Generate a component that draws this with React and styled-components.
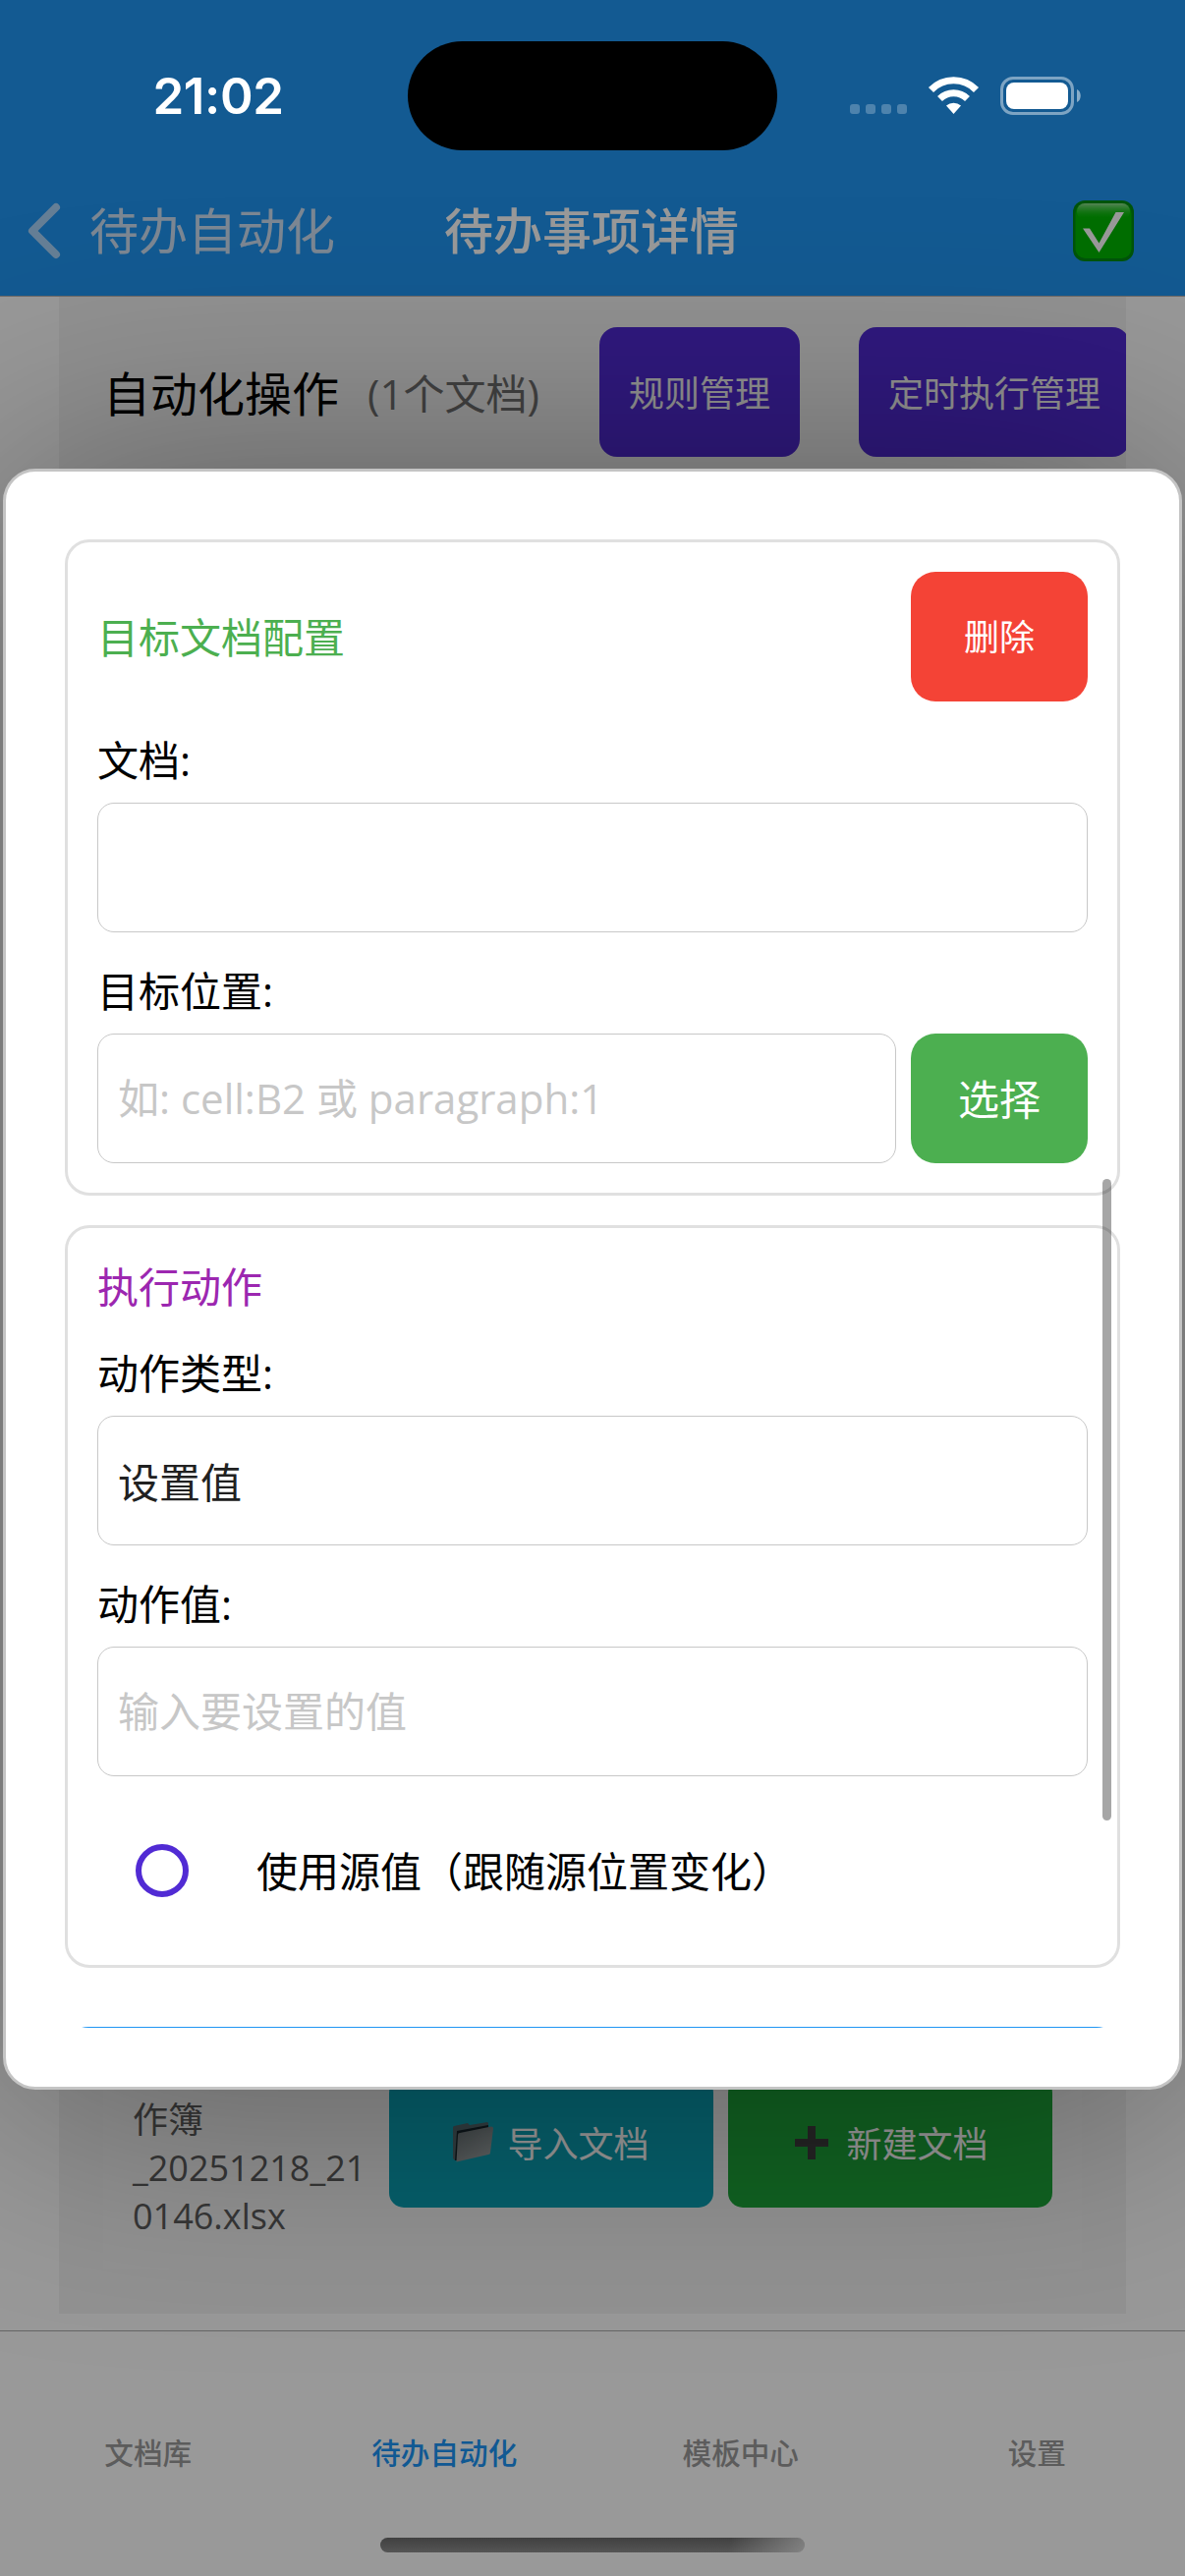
import React, { useState } from "react";
import styled, { createGlobalStyle } from "styled-components";

const GlobalStyle = createGlobalStyle`
  * {
    box-sizing: border-box;
  }

  body {
    margin: 0;
    font-family: "Open Sans", "Noto Sans CJK SC", sans-serif;
  }

  button,
  input {
    font-family: inherit;
    margin: 0;
  }
`;

const Screen = styled.div`
  position: relative;
  display: flex;
  flex-direction: column;
  width: 1206px;
  height: 2622px;
  overflow: hidden;
  background: #fff;
`;

/* status bar */

const StatusBar = styled.div`
  position: absolute;
  z-index: 3;
  top: 0;
  left: 0;
  right: 0;
  display: grid;
  grid-template-columns: 415px 376px 1fr;
  height: 194px;
  align-items: center;
  color: #fff;
`;

const Time = styled.div`
  padding: 2px 0 0 29px;
  text-align: center;
  font-family: Inter, sans-serif;
  font-size: 51px;
  font-weight: 600;
  line-height: 60px;
  letter-spacing: -0.4px;
`;

const Island = styled.div`
  height: 111px;
  border-radius: 56px;
  background: #000;
`;

const Indicators = styled.div`
  display: flex;
  align-items: center;
  padding-left: 74px;
`;

/* page under the dialog */

const NavBar = styled.header`
  display: grid;
  grid-template-columns: 1fr auto 1fr;
  align-items: center;
  flex: none;
  height: 302px;
  padding: 168px 52px 0 28px;
  border-bottom: 1px solid #b5b0ac;
  background: #2196f3;
`;

const BackLink = styled.div`
  display: flex;
  align-items: center;
  gap: 29px;
  color: #cfe2f5;
  font-size: 50px;
  line-height: 60px;
`;

const NavTitle = styled.h1`
  margin: 0 0 0 22px;
  color: #fff;
  font-size: 50px;
  font-weight: 500;
  line-height: 60px;
`;

const NavAction = styled.div`
  display: flex;
  justify-content: flex-end;
`;

const Content = styled.main`
  display: flex;
  flex: 1;
  padding: 0 60px 17px;
  min-height: 0;
`;

const Panel = styled.section`
  display: flex;
  flex: 1;
  min-width: 0;
  flex-direction: column;
  justify-content: space-between;
  padding: 31px 45px 45px;
  overflow: hidden;
  background: #f3f3f3;
`;

const PanelHeader = styled.div`
  display: flex;
  align-items: center;
  white-space: nowrap;
`;

const PanelTitle = styled.h2`
  margin: 0;
  width: 269px;
  flex: none;
  padding-bottom: 3px;
  font-size: 48px;
  font-weight: 400;
  color: #000;
`;

const PanelCount = styled.span`
  width: 236px;
  flex: none;
  padding-bottom: 2px;
  color: #6e6e6e;
  font-size: 42px;
`;

const PurpleButton = styled.button`
  flex: none;
  height: 132px;
  margin-right: 60px;
  padding: 0 30px 2px;
  border: 0;
  border-radius: 18px;
  background: #512bd4;
  color: #f3f3f3;
  font-size: 36px;
`;

const DocumentCard = styled.div`
  display: flex;
  align-items: flex-end;
  height: 300px;
  padding: 30px;
  background: #f5f5f5;
`;

const DocumentName = styled.div`
  width: 261px;
  color: #5c5c5c;
  font-size: 36px;
  line-height: 49px;
`;

const DocumentButton = styled.button`
  display: flex;
  align-items: center;
  justify-content: center;
  gap: 14px;
  width: 330px;
  height: 132px;
  margin: 0 15px 33px 0;
  padding: 0 0 1px;
  border: 0;
  border-radius: 15px;
  background: ${(props) => props.$color};
  color: #fff;
  font-size: 36px;

  &:last-child {
    margin-right: 0;
    padding-left: 3px;
  }
`;

const TabBar = styled.nav`
  display: grid;
  grid-template-columns: repeat(4, 1fr);
  flex: none;
  height: 250px;
  padding-top: 104px;
  border-top: 1px solid #aaa;
  background: #fff;
`;

const Tab = styled.div`
  text-align: center;
  color: ${(props) => (props.$active ? "#1c94f5" : "#999")};
  font-size: 29.6px;
  font-weight: 500;
  line-height: 40px;
`;

const HomeIndicator = styled.div`
  position: absolute;
  z-index: 3;
  left: 387px;
  bottom: 24px;
  width: 432px;
  height: 15px;
  border-radius: 8px;
  background:
    linear-gradient(100deg, transparent 82%, rgba(150, 150, 150, 0.7) 100%),
    linear-gradient(#404040, #555);
`;

/* dialog */

const Overlay = styled.div`
  position: absolute;
  z-index: 2;
  inset: 0;
  padding: 477px 3px 0;
  background: rgba(0, 0, 0, 0.4);
`;

const Dialog = styled.div`
  position: relative;
  height: 1650px;
  padding: 60px;
  border: 3px solid #c4c4c4;
  border-radius: 33px;
  background: #fff;
  box-shadow: 0 6px 350px rgba(0, 0, 0, 0.39);
`;

const DialogBody = styled.div`
  display: flex;
  flex-direction: column;
  gap: 30px;
  height: 1524px;
  padding-top: 9px;
  overflow: hidden;
`;

const Card = styled.section`
  display: flex;
  flex: none;
  flex-direction: column;
  gap: 30px;
  padding: 30px;
  border: 3px solid #e0e0e0;
  border-radius: 25px;
`;

const CardHeader = styled.div`
  display: flex;
  align-items: center;
  justify-content: space-between;
`;

const CardTitle = styled.h3`
  margin: 0;
  height: 58px;
  color: ${(props) => props.$color};
  font-size: 42px;
  font-weight: 400;
  line-height: 60px;
`;

const Field = styled.label`
  display: flex;
  flex-direction: column;
  gap: 15px;
  color: #000;
  font-size: 42px;
`;

const FieldName = styled.span`
  height: 58px;
  line-height: 60px;
`;

const FieldRow = styled.div`
  display: flex;
  gap: 15px;
`;

const Input = styled.input`
  flex: 1;
  min-width: 0;
  height: 132px;
  flex-basis: ${(props) => (props.$inRow ? "0" : "132px")};
  padding: 0 20px 2px;
  border: 1px solid #c8c8c8;
  border-radius: 17px;
  outline: none;
  background: #fff;
  color: #212121;
  font-size: 42px;

  &::placeholder {
    color: #c7c7c7;
    opacity: 1;
  }
`;

const ActionButton = styled.button`
  width: 180px;
  height: 132px;
  padding: 0 0 3px;
  border: 0;
  border-radius: 25px;
  background: ${(props) => props.$color};
  color: #fff;
  font-size: ${(props) => props.$size}px;
`;

const RadioRow = styled.div`
  display: flex;
  align-items: center;
  gap: 69px;
  height: 132px;
  padding-left: 39px;
  font-size: 42px;
`;

const RadioLabel = styled.span`
  padding-bottom: 3px;
`;

const Radio = styled.span`
  width: 54px;
  height: 54px;
  border: 6px solid #512bd4;
  border-radius: 50%;
`;

const SaveButton = styled.button`
  flex: none;
  height: 132px;
  margin-top: 30px;
  border: 0;
  border-radius: 24px;
  background: #2196f3;
`;

const ScrollThumb = styled.div`
  position: absolute;
  top: 720px;
  right: 69px;
  width: 9px;
  height: 653px;
  border-radius: 5px;
  background: rgba(0, 0, 0, 0.35);
`;

const StatusIcons = () => (
  <svg width="236" height="40" viewBox="0 0 236 40">
    {[0, 16, 32, 48].map((x) => (
      <rect key={x} x={x} y="29" width="10" height="10" rx="3" fill="#fff" opacity="0.25" />
    ))}
    <g fill="none" stroke="#fff" strokeWidth="7">
      <path d="M82.5 14.5a32 32 0 0 1 46 0" />
      <path d="M91.5 23.5a20 20 0 0 1 28 0" />
    </g>
    <path d="M98 30.500a11.500 11.500 0 0 1 15 0L105.500 39z" fill="#fff" />
    <rect x="154.500" y="2.500" width="72" height="36" rx="11.500" fill="none" stroke="#fff" strokeWidth="3" opacity="0.45" />
    <rect x="159" y="7" width="63" height="27" rx="8" fill="#fff" />
    <path d="M231 14c5 2 5 11 0 13z" fill="#fff" opacity="0.5" />
  </svg>
);

const ChevronIcon = () => (
  <svg width="34" height="58" viewBox="0 0 34 58">
    <path
      d="M29 5 5 29l24 24"
      fill="none"
      stroke="#a9d4fa"
      strokeWidth="8"
      strokeLinecap="round"
      strokeLinejoin="round"
    />
  </svg>
);

const CheckIcon = () => (
  <svg width="62" height="62" viewBox="0 0 62 62">
    <defs>
      <linearGradient id="gloss" x1="0" y1="0" x2="0" y2="1">
        <stop offset="0" stopColor="#8fdc8f" />
        <stop offset="1" stopColor="#00c000" stopOpacity="0" />
      </linearGradient>
    </defs>
    <rect width="62" height="62" rx="12" fill="#008c12" />
    <rect x="2.500" y="3" width="57" height="56" rx="10" fill="#00b800" />
    <rect x="4" y="3" width="54" height="17" rx="8" fill="url(#gloss)" />
    <path d="M10 28.500h7l9.500 15L43.500 12H52L26.500 53z" fill="#fff" />
  </svg>
);

const FolderIcon = () => (
  <svg width="41" height="41" viewBox="0 0 41 41">
    <defs>
      <linearGradient id="folder" x1="0" y1="0" x2="0.600" y2="1">
        <stop offset="0" stopColor="#646e71" />
        <stop offset="1" stopColor="#9ba1a2" />
      </linearGradient>
    </defs>
    <path d="M0 5 1 4 15 1l2 2 18-3 1 1v6L6 12 4 39H2L0 37z" fill="#53666c" />
    <path d="M4 9 36 3v3L7 12 4 39H2z" fill="#14242a" />
    <path d="M7 11 39 4.500q2 0 2 2L38 31q0 2-2 2L3.500 40.500 5 13q0-2 2-2z" fill="url(#folder)" />
  </svg>
);

const PlusIcon = () => (
  <svg width="38" height="34" viewBox="0 0 38 34">
    <path d="M13 0h8v13h13v8H21v13h-8V21H0v-8h13z" fill="#3e3e3e" />
  </svg>
);

const tabs = ["文档库", "待办自动化", "模板中心", "设置"];

const App = () => {
  const [data, setData] = useState({
    doc: "",
    position: "",
    type: "设置值",
    value: "",
  });

  const handleInput = (prop) => (e) => {
    setData({
      ...data,
      [prop]: e.target.value,
    });
  };

  return (
    <>
      <GlobalStyle />
      <Screen>
        <StatusBar>
          <Time>21:02</Time>
          <Island />
          <Indicators>
            <StatusIcons />
          </Indicators>
        </StatusBar>

        <NavBar>
          <BackLink>
            <ChevronIcon />
            待办自动化
          </BackLink>
          <NavTitle>待办事项详情</NavTitle>
          <NavAction>
            <CheckIcon />
          </NavAction>
        </NavBar>

        <Content>
          <Panel>
            <PanelHeader>
              <PanelTitle>自动化操作</PanelTitle>
              <PanelCount>(1个文档)</PanelCount>
              <PurpleButton>规则管理</PurpleButton>
              <PurpleButton>定时执行管理</PurpleButton>
            </PanelHeader>
            <DocumentCard>
              <DocumentName>
                作簿
                <br />
                _20251218_21
                <br />
                0146.xlsx
              </DocumentName>
              <DocumentButton $color="#0ba1b5">
                <FolderIcon />
                导入文档
              </DocumentButton>
              <DocumentButton $color="#1da53a">
                <PlusIcon />
                新建文档
              </DocumentButton>
            </DocumentCard>
          </Panel>
        </Content>

        <TabBar>
          {tabs.map((tab) => (
            <Tab key={tab} $active={tab === "待办自动化"}>
              {tab}
            </Tab>
          ))}
        </TabBar>

        <Overlay>
          <Dialog>
            <DialogBody>
              <Card>
                <CardHeader>
                  <CardTitle $color="#4caf50">目标文档配置</CardTitle>
                  <ActionButton $color="#f44336" $size={36}>
                    删除
                  </ActionButton>
                </CardHeader>
                <Field>
                  <FieldName>文档:</FieldName>
                  <Input value={data.doc} onChange={handleInput("doc")} />
                </Field>
                <Field>
                  <FieldName>目标位置:</FieldName>
                  <FieldRow>
                    <Input
                      $inRow
                      placeholder="如: cell:B2 或 paragraph:1"
                      value={data.position}
                      onChange={handleInput("position")}
                    />
                    <ActionButton $color="#4caf50" $size={42}>
                      选择
                    </ActionButton>
                  </FieldRow>
                </Field>
              </Card>

              <Card>
                <CardTitle $color="#9c27b0">执行动作</CardTitle>
                <Field>
                  <FieldName>动作类型:</FieldName>
                  <Input value={data.type} onChange={handleInput("type")} />
                </Field>
                <Field>
                  <FieldName>动作值:</FieldName>
                  <Input
                    placeholder="输入要设置的值"
                    value={data.value}
                    onChange={handleInput("value")}
                  />
                </Field>
                <RadioRow>
                  <Radio />
                  <RadioLabel>使用源值（跟随源位置变化）</RadioLabel>
                </RadioRow>
              </Card>

              <SaveButton />
            </DialogBody>
            <ScrollThumb />
          </Dialog>
        </Overlay>

        <HomeIndicator />
      </Screen>
    </>
  );
};

export default App;
